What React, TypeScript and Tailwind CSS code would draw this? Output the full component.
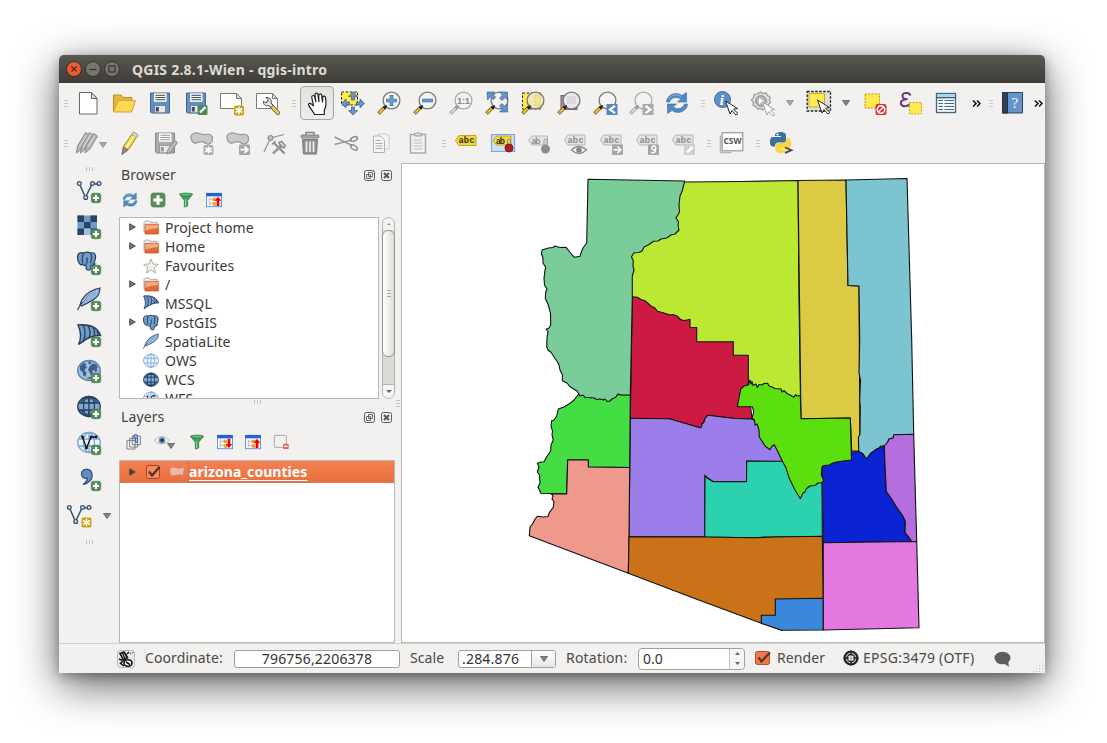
import React from "react";

type Kids = { children?: React.ReactNode };

const BLUE = "#6f9bcb";
const NAVY = "#2a3f5c";

/* ---------- icon primitives (24 unit grid) ---------- */

function Icon({ children, className = "size-6" }: Kids & { className?: string }) {
  return (
    <svg viewBox="0 0 24 24" className={`shrink-0 overflow-visible ${className}`} fill="none">
      {children}
    </svg>
  );
}

function Plus({ x = 14, y = 14 }: { x?: number; y?: number }) {
  return (
    <g transform={`translate(${x} ${y})`}>
      <rect x="0.3" y="0.3" width="9.4" height="9.4" rx="2" fill="#5a8f5b" stroke="#477a49" strokeWidth="0.7" />
      <path d="M5 2v6M2 5h6" stroke="#fff" strokeWidth="2" />
    </g>
  );
}

function Spark({ x = 14, y = 14, gray = false }: { x?: number; y?: number; gray?: boolean }) {
  return (
    <g transform={`translate(${x} ${y})`}>
      <rect width="10" height="10" rx="2" fill={gray ? "#a9a9a9" : "#c9a20c"} />
      <path d="M5 1.3v7.4M1.5 3l7 4M8.5 3l-7 4" stroke="#fff" strokeWidth="1.5" />
    </g>
  );
}

function Lens({ children, gray = false, fill = "#f3f3f2" }: Kids & { gray?: boolean; fill?: string }) {
  const dark = gray ? "#9a9a9a" : "#222";
  return (
    <>
      <circle cx="14.5" cy="9.5" r="8.4" fill={fill} stroke={gray ? "#aaa" : "#777"} strokeWidth="1.3" />
      <path d="M1.5 22.5 8 16" stroke={gray ? "#999" : "#6d5320"} strokeWidth="3.6" />
      <path d="M2 22 7.3 16.7" stroke={gray ? "#d8d8d8" : "#f9c22d"} strokeWidth="2.2" />
      <path d="M6 16.5 9.5 14.5 8.5 18z" fill={dark} stroke={dark} />
      {children}
    </>
  );
}

function Floppy({ gray = false }: { gray?: boolean }) {
  return (
    <>
      <path d="M2.5 2h19v20h-18l-1-1z" fill={gray ? "#aaa" : "#6290c4"} stroke={gray ? "#888" : "#3f6690"} />
      <rect x="6" y="2.3" width="12.5" height="8.5" fill="#fafafa" />
      <path d="M7.5 4.3h9.500M7.500 6.500h9.500M7.500 8.700h9.500" stroke={gray ? "#999" : "#444"} strokeWidth="1" />
      <rect x="6.500" y="14.500" width="11" height="7.300" fill="#e8e8e6" stroke={gray ? "#888" : "#58718c"} strokeWidth="0.700" />
      <rect x="7.800" y="16" width="3" height="4.500" fill={gray ? "#999" : "#35506e"} />
    </>
  );
}

function Pointer({ x = 12, y = 10, gray = false }: { x?: number; y?: number; gray?: boolean }) {
  return (
    <path
      transform={`translate(${x} ${y})`}
      d="M0 0 12 7.500 8 8.200 12.500 12.500 10.500 14 6.500 9.500 4.500 13z"
      fill="#fff"
      stroke={gray ? "#a2a2a2" : "#222"}
      strokeWidth="1"
    />
  );
}

function Blob() {
  return (
    <path
      d="M1.500 9C-.5 4 3 1.500 8 2c3 1 5 2 8 1.500 4-1 7 1 6.500 5-.5 4-3 5.500-6.500 4-3-2.500-5-2.500-8-1-3 1.500-5 .5-6.500-2.500z"
      fill="#c9c9c9"
      stroke="#949494"
      strokeWidth="1.200"
    />
  );
}

function Label({ gray = true, children }: Kids & { gray?: boolean }) {
  return (
    <>
      <path
        d="M5 5.500h17v10H5L1.300 10.500z"
        fill={gray ? "#e4e4e3" : "#f2d840"}
        stroke={gray ? "#b5b5b5" : "#c3a41c"}
        strokeWidth="1"
      />
      <text x="4.700" y="13" fontSize="8.500" fontWeight="700" fontFamily="Liberation Sans, sans-serif" fill={gray ? "#8a8a8a" : "#2d2d1a"} textLength="15.500">
        abc
      </text>
      {children}
    </>
  );
}

function GrayBadge({ children }: Kids) {
  return (
    <g>
      <rect x="13" y="13.500" width="11" height="10.500" rx="1" fill="#a6a6a6" />
      {children}
    </g>
  );
}

function Refresh() {
  return (
    <g fill="#4f8acb" stroke="#38699f" strokeWidth="0.600">
      <path d="M1.500 11C2 4 10 0 17 4.500L21.500 1.500v9.500h-9l3.500-3C11 5 6 6.500 4.500 11z" />
      <path d="M22.500 13C22 20 14 24 7 19.500L2.500 22.500v-9.500h9L8 16c5 3 10 1.500 11.500-3z" />
      <path d="M3.500 8C6 4 11 2.500 16 5.500" stroke="#a8cdf2" fill="none" />
    </g>
  );
}

function Funnel() {
  return (
    <>
      <path d="M2 3h20l-7.500 9.500V21L9.500 22.500v-10z" fill="#3aa457" stroke="#28693a" strokeWidth="1" />
      <ellipse cx="12" cy="4" rx="9.500" ry="2.300" fill="#58c277" stroke="#28693a" />
      <path d="M11.500 11v10" stroke="#92dca5" strokeWidth="1.600" />
    </>
  );
}

function TreePanel({ up = true }: { up?: boolean }) {
  return (
    <>
      <rect x="0.700" y="2" width="22.600" height="20" fill="#f7f9fc" stroke="#5b93e0" strokeWidth="1.400" />
      <rect x="0.500" y="1.500" width="23" height="5" fill="#2262d8" />
      <path d="M5 9v11M5 11h5M5 17h5" stroke="#bbb" strokeWidth="1.500" />
      <path d="M10 8.500h5v5h-5zM10 15.500h5v5h-5z" fill="#f0a030" />
      {up ? <path d="M18 7l5 6h-3v8h-4v-8h-3z" fill="#e90000" /> : <path d="M18 21l5-6h-3V7h-4v8h-3z" fill="#e90000" />}
    </>
  );
}

function Nodes() {
  return (
    <>
      <path d="M2.500 5 8.500 18.500 15 5h6.500" stroke="#34506f" strokeWidth="1.500" />
      <g fill="#d9e6f3" stroke="#34506f" strokeWidth="1.300">
        <circle cx="2.300" cy="4.500" r="1.900" />
        <circle cx="15.500" cy="4.500" r="1.900" />
        <circle cx="22" cy="4.500" r="1.900" />
        <circle cx="8.700" cy="18.500" r="1.900" />
      </g>
    </>
  );
}

function Elephant() {
  return (
    <>
      <path
        d="M.5 6C.5 2 4 1 6.500 2c2-1 5-1 7 0C17 1 19 3 18.500 7c-.5 3-1 5-2.500 6h2l-2 1.500h-2V17c-.5 3-4.500 3-5 0v-3l-2 .5L5.500 13 4 14C2 12.500.5 9.500.500 6z"
        fill={BLUE}
        stroke={NAVY}
        strokeWidth="1.200"
      />
      <path d="M6.500 2C5 6 5 9 6 12M9 13c2-1 1-4 1-6.500M13.500 2c2 3 1 7 0 10" stroke={NAVY} strokeWidth="1.200" />
    </>
  );
}

function Feather() {
  return (
    <>
      <path d="M3 18C5 10 12 3.500 23 1c0 7-3.500 10-7 12-4 2.500-7 4-11.500 6z" fill="#8fb3dc" stroke={NAVY} strokeWidth="1.100" />
      <path d="M0.500 23C4 15 11 8.500 19 4.500" stroke={NAVY} strokeWidth="1.200" />
      <path d="M5 15c5-5 9-8 15-11" stroke="#dbe8f6" strokeWidth="1" />
    </>
  );
}

function Sail() {
  return (
    <>
      <path d="M1 2c10-1 19 1 22.500 10.500C15 12 9 16 1.500 21.500c3-6 2.500-13-.5-19.500z" fill={BLUE} stroke={NAVY} strokeWidth="1.400" />
      <path d="M6 2c2.500 4.500 2.500 10.500.5 16M11 2.800c2.500 4 2.500 8 1 12M16 5c2 3 2 5.500 1 8.300M20 8c1 1.500 1.200 3 .8 4.500" stroke={NAVY} strokeWidth="1.300" />
    </>
  );
}

function Globe({ tone }: { tone: "light" | "dark" | "map" }) {
  const line = tone === "light" ? "#7fa5d6" : tone === "dark" ? NAVY : "#5c7fa8";
  return (
    <>
      <ellipse cx="12" cy="11.500" rx="11.300" ry="10" fill={tone === "light" ? "#eef4fc" : tone === "dark" ? "#7fa8d8" : "#9fbfe2"} stroke={line} strokeWidth="1.300" />
      {tone === "map" ? (
        <path d="M3 7l3-3 3 .5-.5 2.500 2 1-2 1.500-1 2 2 2-1 4-2-.5-1-4-2.500-2zM11 3l3-.5v2l-2 1zM13 7l2.500-2.500 4 1 1.500 3-1.500 1 1 2-2 2-1-2.500-2 .5v3l-1.500 2-1.500-3.500-1.500-2 1-2.500zM18 15l3 0-1.500 3zM9 19l4-1 3 1-3 1z" fill="#3e5f88" />
      ) : (
        <>
          {tone === "dark" && <path d="M5.500 3.500q6.500-4 13 0l3 4.500H2.500zM2.500 15h19l-3 4.500q-6.500 4-13 0z" fill="#244a72" opacity="0.800" />}
          <path d="M12 1.500v20M1.500 8h21M1.500 15h21" stroke={line} strokeWidth="1.300" />
          <ellipse cx="12" cy="11.500" rx="5.500" ry="10" stroke={line} strokeWidth="1.300" />
          {tone === "dark" && <path d="M8.500 4.500h2.500v2.500H7.500zM13 4.500h2.500l1 2.500H13zM7.500 16H11v2.500H8.500zM13 16h3.500l-1 2.500H13z" fill="#7fa8d8" />}
        </>
      )}
    </>
  );
}

/* ---------- layout parts ---------- */

function Cell({ children, className = "w-9" }: Kids & { className?: string }) {
  return <div className={`flex h-10 shrink-0 items-center justify-center ${className}`}>{children}</div>;
}

function Grip({ className = "w-[13px]" }: { className?: string }) {
  return (
    <div className={`flex shrink-0 flex-col items-center justify-center gap-[2px] pl-[2px] ${className}`}>
      <i className="h-px w-1 bg-[#c9c7c4]" />
      <i className="h-px w-1 bg-[#c9c7c4]" />
      <i className="h-px w-1 bg-[#c9c7c4]" />
    </div>
  );
}

function GripH() {
  return (
    <div className="flex h-1 justify-center gap-[2px]">
      <i className="h-1 w-px bg-[#c4c2bf]" />
      <i className="h-1 w-px bg-[#c4c2bf]" />
      <i className="h-1 w-px bg-[#c4c2bf]" />
    </div>
  );
}

function Caret({ light = false }: { light?: boolean }) {
  return (
    <svg viewBox="0 0 8 6" className="h-[6px] w-2 shrink-0">
      <path d="M.5.5h7L4 5.500z" fill={light ? "#a8a8a8" : "#858585"} stroke={light ? "#8d8d8d" : "#555"} strokeWidth="0.800" />
    </svg>
  );
}

function More() {
  return (
    <svg viewBox="0 0 9 7" className="h-[7px] w-[9px] shrink-0">
      <path d="M1 .5 4 3.500 1 6.500M5 .5l3 3-3 3" fill="none" stroke="#111" strokeWidth="1.500" />
    </svg>
  );
}

function MainToolbar() {
  return (
    <div className="flex h-10">
      <Grip className="w-[11px]" />
      <Cell>
        <Icon><path d="M3.500 1.500h12l5.500 6v15.500h-17.500z" fill="#fff" stroke="#666" /><path d="M15.500 1.500v6H21z" fill="#ddd" stroke="#666" /></Icon>
      </Cell>
      <Cell>
        <Icon><path d="M1.500 20V4h7.500l2 2.500h9V20z" fill="#e6b63d" stroke="#c18e24" /><path d="M1.500 21 6 9.500h17.500L19.500 21z" fill="#fcd851" stroke="#d5a52f" /></Icon>
      </Cell>
      <Cell><Icon><Floppy /></Icon></Cell>
      <Cell>
        <Icon><Floppy /><rect x="13.500" y="14" width="10" height="10" rx="1.500" fill="#4f8a55" /><path d="M16 21.500 21.500 16" stroke="#fff" strokeWidth="2.200" /></Icon>
      </Cell>
      <Cell>
        <Icon><path d="M.5 2.500h16l5 5v10H.5z" fill="#fff" stroke="#777" /><path d="M16.500 2.500v5h5z" fill="#ddd" stroke="#777" /><Spark x={14} y={14.500} /></Icon>
      </Cell>
      <Cell>
        <Icon>
          <path d="M.5 2.500h16l5 5v10H.5z" fill="#fff" stroke="#777" /><path d="M16.500 2.500v5h5z" fill="#ddd" stroke="#777" />
          <path d="M15.500 15 22 22" stroke="#6d5b21" strokeWidth="4.200" strokeLinecap="round" />
          <path d="M15.500 15 22 22" stroke="#e5ca63" strokeWidth="2.600" strokeLinecap="round" />
          <path d="M10 6.500l2 2-.5 2.500-2.500.5-1.500-1.500c-.5 3.500 2 5.500 5 4.500l2.500 2 2-2-2-2.500C16 9 13.500 6 10 6.500z" fill="#e5e5e5" stroke="#444" />
        </Icon>
      </Cell>
      <Grip />
      <Cell>
        <div className="flex h-[34px] w-[34px] items-center justify-center rounded border border-[#a9a6a1] bg-linear-to-b from-[#e3e1de] to-[#efedeb] pt-[2px] pl-[3px]">
          <Icon>
            <path d="M7.500 22.500C6 19 2.500 16 1.500 12.500 1.800 10.500 4 11 6.500 14L4.700 5c.3-2 2.300-2 3 0l1.200 5-1-7.500c.5-1.800 2.600-1.800 3 0l1 7.500-.2-7c.5-1.600 2.500-1.600 3 0l.8 7.500.2-5.500c.8-1.400 2.600-1 2.800.8.8 4.200 1 8.200-1.200 12.200v4.500z" fill="#fff" stroke="#222" strokeWidth="1.200" />
          </Icon>
        </div>
      </Cell>
      <Cell>
        <Icon>
          <rect x="0.500" y="1" width="16" height="13" fill="#ffe84c" stroke="#222" strokeDasharray="2.500 1.700" />
          <g fill="#6895cb" stroke="#34587f" strokeWidth="0.700">
            <path d="M12 1 16.500 5.500h-3V9h-3V5.500H7.500zM12 24 16.500 19.500h-3V16h-3v3.500H7.500zM.5 12.500 5 8v3h3.500v3H5v3zM23.500 12.500 19 8v3H15.500v3H19v3z" />
          </g>
        </Icon>
      </Cell>
      <Cell><Icon><Lens><path d="M14.500 4v11M9 9.500h11" stroke="#44719f" strokeWidth="3.600" /><path d="M14.500 4.500v10M9.500 9.500h10" stroke={BLUE} strokeWidth="2.300" /></Lens></Icon></Cell>
      <Cell><Icon><Lens><path d="M9 9.500h11" stroke="#44719f" strokeWidth="3.600" /><path d="M9.500 9.500h10" stroke={BLUE} strokeWidth="2.300" /></Lens></Icon></Cell>
      <Cell><Icon><Lens gray><text x="8" y="12.800" fontSize="9.500" fontWeight="700" fontFamily="Liberation Sans, sans-serif" fill="#888" textLength="13">1:1</text></Lens></Icon></Cell>
      <Cell>
        <Icon><Lens>
          <g fill="#6494cb" stroke="#34587f" strokeWidth="0.600">
            <path d="M2 1h8L7.700 3.300l3 3-2.400 2.400-3-3L2.500 9zM22.500 1v8L20 6.500l-3 3-2.500-2.500 3-3L14.500 1zM22.500 21v-8L20 15.500l-3-3-2.500 2.500 3 3-3 3z" />
          </g>
        </Lens></Icon>
      </Cell>
      <Cell>
        <Icon><rect x="1.500" y="2" width="18" height="16" fill="#ffe84c" stroke="#222" strokeDasharray="2.500 1.700" /><Lens fill="#eee8b8"><path d="M14 4h5v11h-5z" fill="#f4e688" stroke="#b9a848" strokeDasharray="2 1.500" strokeWidth="0.500" /></Lens></Icon>
      </Cell>
      <Cell>
        <Icon><rect x="4" y="4.500" width="16" height="14" fill="#a58fa9" stroke="#776080" /><Lens fill="#e9e7ea"><path d="M10 5h9v8h-9z" fill="#dcd8de" /></Lens></Icon>
      </Cell>
      <Cell><Icon><Lens><rect x="13.500" y="13" width="11" height="11" fill="#5687bd" /><path d="M22 14.800 17 18.500l5 3.700" stroke="#fff" strokeWidth="2.200" /></Lens></Icon></Cell>
      <Cell><Icon><Lens gray><rect x="13.500" y="13" width="11" height="11" fill="#aaa" /><path d="M16.500 14.800l5 3.700-5 3.700" stroke="#fff" strokeWidth="2.200" /></Lens></Icon></Cell>
      <Cell><Icon><Refresh /></Icon></Cell>
      <Grip />
      <Cell>
        <Icon>
          <circle cx="8.500" cy="8.500" r="8" fill="#5c8fc9" stroke="#3e6ea6" />
          <text x="5.800" y="14" fontSize="15" fontStyle="italic" fontWeight="700" fontFamily="Liberation Serif, serif" fill="#fff">i</text>
          <Pointer x={11.500} y={10} />
        </Icon>
      </Cell>
      <Cell>
        <Icon>
          <path d="M10.500 1l2.500 1.500 3-.5 1.500 2.500 2.500 1.500-.5 3 1 2.500-2 2-.5 3-3 .5-2.500 2-2-1.500-3 .5L6 16l-3-1.500.500-3L1.500 9l2-2.500L4 3.500 7 3z" fill="#dedede" stroke="#999" strokeWidth="1.200" />
          <circle cx="11" cy="10" r="5.300" fill="#b8b8b8" stroke="#888" /><path d="M9 7v6l5-3z" fill="#fff" />
          <Pointer x={12.500} y={11} gray />
        </Icon>
      </Cell>
      <Cell className="w-[21px] pr-[1px]"><Caret light /></Cell>
      <Cell>
        <Icon><rect x="0.200" y="0.500" width="23.300" height="19.500" fill="#dedede" stroke="#222" strokeWidth="1.300" strokeDasharray="2.500 1.500" /><path d="M2 2.500h15.500V16H2z" fill="#fee94e" stroke="#c7ad2a" /><Pointer x={10.500} y={9} /></Icon>
      </Cell>
      <Cell className="w-5 pr-[2px]"><Caret /></Cell>
      <Cell>
        <Icon>
          <rect x="2" y="3" width="14.500" height="14" fill="#fee94e" stroke="#b49422" strokeDasharray="2 1.200" />
          <rect x="12.500" y="13" width="11" height="11" rx="2" fill="#dc3030" />
          <circle cx="18" cy="18.500" r="3.700" stroke="#fff" strokeWidth="1.500" /><path d="M15.500 21 20.500 16" stroke="#fff" strokeWidth="1.500" />
        </Icon>
      </Cell>
      <Cell>
        <Icon>
          <path d="M11.500 4.500C10 .5 3 1.500 3.500 5.500c.2 2 2.500 3 5 2.700C3 8.200 1 11 2 13c1.500 3.500 8 2.500 9.500-1" stroke="#633a72" strokeWidth="2" />
          <rect x="10.500" y="11.500" width="12" height="11.500" fill="#fee94e" stroke="#c7a930" strokeDasharray="2 1.200" />
        </Icon>
      </Cell>
      <Cell>
        <Icon>
          <rect x="1.500" y="2.500" width="19" height="19" fill="#f5f8fa" stroke="#456579" strokeWidth="1.300" />
          <path d="M2 3h18v3H2z" fill="#a2d9ee" /><path d="M1.500 6.700h19" stroke="#3f5a70" strokeWidth="1.300" />
          <path d="M3.500 9.500H8M9.500 9.500H19M3.500 12.500H8M9.500 12.500H19M3.500 15.500H8M9.500 15.500H19M3.500 18.500H8M9.500 18.500H19" stroke="#45637a" strokeWidth="1.200" />
        </Icon>
      </Cell>
      <Cell className="w-6 pr-[2px]"><More /></Cell>
      <Grip className="w-[2px]" />
      <Cell className="w-[42px]">
        <Icon>
          <path d="M2.500 1.500h20V22h-20z" fill="#6394ca" stroke="#2b4562" /><path d="M2.500 1.500h5V22h-5z" fill="#2f4254" stroke="#263545" />
          <text x="11.500" y="17" fontSize="15" fontFamily="Liberation Serif, serif" fill="#fff">?</text>
        </Icon>
      </Cell>
      <Cell className="w-[10px]"><More /></Cell>
    </div>
  );
}

function EditToolbar() {
  return (
    <div className="flex h-10">
      <Grip className="w-[11px]" />
      <Cell className="w-[42px] pr-[1px]">
        <Icon>
          <g fill="#b5b5b5" stroke="#858585" strokeWidth="0.900">
            <path d="M1.500 22l1-7L10.500 1.500l4 2.500L6.500 18z" />
            <path d="M5.500 22l1-7L14.500 1.500l4 2.500L10.500 18z" />
            <path d="M10 22l1-7L18.500 2.500l4 2.500L15 18z" />
          </g>
          <path d="M4.500 16 12 3.500M8.500 16l7.500-12.500M13 16 20 4.500" stroke="#dedede" />
        </Icon>
        <div className="pt-1"><Caret light /></div>
      </Cell>
      <Cell>
        <Icon>
          <path d="M4 23.500 5.500 15.500 15.500 1l4.500 3L10.500 18.500z" fill="#f4da4b" stroke="#97812a" />
          <path d="M8 17 17.500 2.500" stroke="#fff5a5" strokeWidth="1.400" /><path d="M15.500 1l4.500 3-1.500 2.300-4.500-3z" fill="#ddd" stroke="#999" strokeWidth="0.800" />
          <path d="M4 23.500 5.500 15.700l4.700 3z" fill="#8d8d85" stroke="#666" strokeWidth="0.700" />
        </Icon>
      </Cell>
      <Cell><Icon><g transform="translate(-1 0)"><Floppy gray /></g><path d="M13 23l1-4.500L20.500 9.500l3 2L17 21z" fill="#bbb" stroke="#888" /></Icon></Cell>
      <Cell><Icon><Blob /><Spark x={13.500} y={14} gray /></Icon></Cell>
      <Cell><Icon><Blob /><GrayBadge><path d="M14.500 18.700h6M18.500 15.500l3.500 3.200-3.500 3.200" stroke="#fff" strokeWidth="1.800" /></GrayBadge></Icon></Cell>
      <Cell>
        <Icon>
          <path d="M2 21 8.500 7 22 3.500" stroke="#8f8f8f" strokeWidth="1.200" /><circle cx="8.500" cy="7" r="2.600" fill="#bbb" stroke="#888" />
          <path d="M12 12l10.500 10.500" stroke="#8d8d8d" strokeWidth="2.200" /><path d="M20 14l-9 8.500" stroke="#9a9a9a" strokeWidth="2.600" />
          <path d="M10 13.500l3.500-3.500M17 11.500l2.500-1 3.500 4-1 2-3-.500z" stroke="#8d8d8d" strokeWidth="1.700" />
        </Icon>
      </Cell>
      <Cell>
        <Icon>
          <path d="M8 4.500V1.500h8v3" stroke="#858585" strokeWidth="1.500" /><rect x="3" y="4" width="18" height="3" rx="1" fill="#a6a6a6" stroke="#777" strokeWidth="0.800" />
          <path d="M4.500 8.500h15L18.500 23h-13z" fill="#929292" stroke="#777" /><path d="M8.500 10.500v10.500M12 10.500v10.500M15.500 10.500v10.500" stroke="#eee" strokeWidth="1.700" />
        </Icon>
      </Cell>
      <Cell>
        <Icon>
          <path d="M.5 6 18 14.500M.5 13.500 18 9" stroke="#999" strokeWidth="1.700" />
          <ellipse cx="20" cy="8" rx="3.700" ry="2" transform="rotate(-25 20 8)" stroke="#888" strokeWidth="1.400" />
          <ellipse cx="20" cy="16.500" rx="3.700" ry="2" transform="rotate(30 20 16.500)" stroke="#888" strokeWidth="1.400" />
        </Icon>
      </Cell>
      <Cell>
        <Icon>
          <path d="M8.500 3h7.500l3 2.500V18H8.500z" fill="#f5f5f5" stroke="#c9c9c9" /><path d="M3.500 5h7l4 4V21.500h-11z" fill="#f6f6f6" stroke="#b2b2b2" />
          <path d="M5.500 9.500h5M5.500 12.500h7M5.500 15h7M5.500 17.500h7" stroke="#aaa" />
        </Icon>
      </Cell>
      <Cell>
        <Icon>
          <path d="M4.500 3.500h15v18.500h-15z" fill="#f2f2f1" stroke="#aaa" strokeWidth="1.500" /><path d="M8.500 5V2.500h2q1.500-2.500 3 0h2V5z" fill="#ddd" stroke="#999" />
          <path d="M7.500 9h8M7.500 12h9M7.500 15h9M7.500 18h9" stroke="#bbb" />
        </Icon>
      </Cell>
      <Grip />
      <Cell><Icon><g transform="translate(-1 -1)"><Label gray={false} /></g></Icon></Cell>
      <Cell>
        <Icon>
          <path d="M.5 3.500h23v17H.5z" fill="#cfdff3" stroke="#7da6de" strokeWidth="1.200" />
          <path d="M5.500 5H20v9H5.500L2 9.500z" fill="#f1d944" stroke="#c3a41c" />
          <text x="5" y="12.500" fontSize="8.500" fontWeight="700" fontFamily="Liberation Sans, sans-serif" fill="#2d2d1a" textLength="9">ab</text>
          <path d="M16.500 14V9q1.500-1.500 3 0V13.500" stroke="#888" /><circle cx="18" cy="17" r="4" fill="#b01f24" stroke="#861a1e" />
        </Icon>
      </Cell>
      <Cell>
        <Icon>
          <path d="M5 5h15.500v9H5L1.500 9.500z" fill="#e4e4e3" stroke="#b5b5b5" />
          <text x="4.500" y="12.500" fontSize="8.500" fontWeight="700" fontFamily="Liberation Sans, sans-serif" fill="#909090" textLength="9">ab</text>
          <path d="M17 14V9q1.500-1.500 3 0V13" stroke="#999" /><circle cx="18.500" cy="18" r="4.500" fill="#8c8c8c" />
        </Icon>
      </Cell>
      <Cell>
        <Icon><g transform="translate(0 -1.500)"><Label /></g><path d="M8.500 19q7-7 15 0-7.500 7-15 0z" fill="#f3f3f3" stroke="#8c8c8c" strokeWidth="1.200" /><circle cx="16" cy="19" r="2.800" fill="#888" /></Icon>
      </Cell>
      <Cell><Icon><g transform="translate(0 -1.500)"><Label /></g><GrayBadge><path d="M14.500 18.700h6M18.500 15.500l3.500 3.200-3.500 3.200" stroke="#fff" strokeWidth="1.500" /></GrayBadge></Icon></Cell>
      <Cell><Icon><g transform="translate(0 -1.500)"><Label /></g><GrayBadge><path d="M20.500 18a2 2 0 1 0-3.500 0 2 2 0 0 0 3.500 0v2q-1 2.500-4.500 1.500" stroke="#fff" strokeWidth="1.400" /></GrayBadge></Icon></Cell>
      <Cell><Icon><g transform="translate(0 -1.500)"><Label /></g><rect x="13" y="13.500" width="11" height="10.500" fill="#cfcfcf" /><path d="M15.500 22 16 19.500 20.500 15l2 2-4.500 4.500z" fill="#fff" /></Icon></Cell>
      <Grip />
      <Cell>
        <Icon>
          <path d="M.5 4.500v17h11" stroke="#b5b5b5" strokeWidth="1.500" /><rect x="2.200" y="1.700" width="20.500" height="18" fill="#fff" stroke="#aaa" strokeWidth="1.500" />
          <text x="3.500" y="13" fontSize="9" fontWeight="700" fontFamily="Noto Sans, sans-serif" fill="#555" textLength="18" lengthAdjust="spacingAndGlyphs">CSW</text>
        </Icon>
      </Cell>
      <Grip />
      <Cell>
        <Icon>
          <path d="M6 4C6 0 17 0 17 4v5q0 2.500-3 2.500H9.500Q6 11.500 6 15.500H3.500C0 15.500 0 6 3.500 6H12V5H6z" fill="#3c6f9f" />
          <path d="M17.500 19c0 4-11 4-11 0v-4.500q0-2.500 3-2.500h5q3.300 0 3.300-5H19.500c3.500 0 3.500 10.500 0 10.500H12v1h5.500z" fill="#fcd440" />
          <circle cx="8.500" cy="3.500" r="1.100" fill="#fff" />
          <path d="M16 16.500l6.500 2.700-6.500 2.700" stroke="#444" strokeWidth="1.700" />
        </Icon>
      </Cell>
    </div>
  );
}

function SideTool({ children }: Kids) {
  return <div className="flex h-9 shrink-0 items-center justify-center"><Icon>{children}</Icon></div>;
}

function SideBar() {
  return (
    <div className="flex w-[60px] shrink-0 flex-col pt-1">
      <GripH />
      <div className="h-[2px]" />
      <SideTool><Nodes /><Plus /></SideTool>
      <SideTool>
        <path d="M.5.5H20v19H.5z" fill={BLUE} />
        <path d="M.5.5H7V7H.5zM13.500.5H20V7h-6.500zM7 7h6.500v6.500H7zM.5 13.500H7V20H.5zM13.500 13.500H20V20h-6.500z" fill="#2a415f" />
        <path d="M7 13.500h6.500V20H7z" fill="#9dbfe3" /><Plus />
      </SideTool>
      <SideTool><Elephant /><Plus /></SideTool>
      <SideTool><Feather /><Plus /></SideTool>
      <SideTool><Sail /><Plus /></SideTool>
      <SideTool><Globe tone="map" /><Plus /></SideTool>
      <SideTool><Globe tone="dark" /><Plus /></SideTool>
      <SideTool>
        <Globe tone="light" />
        <path d="M5.500 6 9.500 17 14 6h5" stroke="#111" strokeWidth="1.300" />
        <g fill="#111"><circle cx="5.500" cy="6" r="1.400" /><circle cx="9.500" cy="17" r="1.400" /><circle cx="14" cy="6" r="1.400" /><circle cx="19" cy="6" r="1.400" /></g><Plus />
      </SideTool>
      <SideTool>
        <path d="M4.500 6.500c0-5 9.500-6 10.500.5C16 12.500 11 17 6 17.500c3-2 4.500-4 4-6.500-3 1-5.500-1-5.500-4.500z" fill="#5f8fc6" stroke="#2d4a6c" strokeWidth="1.200" /><Plus />
      </SideTool>
      <div className="flex h-9 shrink-0 items-center gap-[10px] pl-2">
        <Icon><Nodes /><Spark x={14.500} y={14.500} /></Icon>
        <div className="pt-0.5 pl-0.5"><Caret /></div>
      </div>
      <div className="h-[7px]" />
      <GripH />
    </div>
  );
}

function DockTitle({ children }: Kids) {
  return (
    <div className="flex h-6 items-center gap-1 pr-[2px] pb-[2px] pl-[2px]">
      <span className="flex-1 text-[14px] leading-5 tracking-[0.1px] text-[#44433f]">{children}</span>
      <svg viewBox="0 0 13 13" className="size-[13px]" fill="none" stroke="#5b5b58">
        <rect x="1.500" y="1.500" width="10" height="10" rx="2" /><path d="M5.500 3.500h4v4h-4zM3.500 5.500h4v4h-4z" strokeWidth="0.900" />
      </svg>
      <svg viewBox="0 0 13 13" className="size-[13px]" fill="none" stroke="#5b5b58">
        <rect x="1.500" y="1.500" width="10" height="10" rx="2" /><path d="M4 4l5 5M9 4 4 9" strokeWidth="2.200" />
      </svg>
    </div>
  );
}

function FolderIcon() {
  return (
    <>
      <path d="M1.500 19V3.500l2-2h6l1.500 2h10V7" fill="#f2f2f2" stroke="#888" />
      <path d="M3 6.500H23V21H3z" fill="#e46b34" stroke="#bb4319" /><path d="M3.500 7h19v5q-9 0-19 4z" fill="#f6a97d" />
    </>
  );
}

const tree: { label: string; expand?: boolean; icon: React.ReactNode }[] = [
  { label: "Project home", expand: true, icon: <FolderIcon /> },
  { label: "Home", expand: true, icon: <FolderIcon /> },
  { label: "Favourites", icon: <path d="M12 1.500l3 7.500 8 .5-6.200 5L19 22.500l-7-4.500-7 4.500 2.200-8L1 9.500 9 9z" fill="#f1f1ea" stroke="#a9ab9c" strokeWidth="1.400" /> },
  { label: "/", expand: true, icon: <FolderIcon /> },
  { label: "MSSQL", icon: <g transform="translate(0 -2)"><Sail /></g> },
  { label: "PostGIS", expand: true, icon: <g transform="translate(0 -1) scale(1.22)"><Elephant /></g> },
  { label: "SpatiaLite", icon: <g transform="translate(0 -1)"><Feather /></g> },
  { label: "OWS", icon: <Globe tone="light" /> },
  { label: "WCS", icon: <Globe tone="dark" /> },
  { label: "WFS", icon: <><Globe tone="light" /><path d="M6 7l4 10 4-10h5" stroke="#222" strokeWidth="1.500" /></> },
];

function Expander({ dark = false }: { dark?: boolean }) {
  return (
    <svg viewBox="0 0 7 8" className="h-2 w-[7px] shrink-0">
      <path d="M.7.8 6.300 4 .7 7.200z" fill={dark ? "#4d4038" : "#777"} stroke="#444" strokeWidth="0.900" />
    </svg>
  );
}

function BrowserDock() {
  return (
    <>
      <DockTitle>Browser</DockTitle>
      <div className="flex h-[29px] items-center gap-3 pb-[5px] pl-[3px]">
        <Icon className="size-4"><Refresh /></Icon>
        <Icon className="size-4">
          <rect x="1.500" y="1.500" width="21" height="21" rx="4" fill="#5a8f5b" stroke="#447b48" /><path d="M12 5v14M5 12h14" stroke="#fff" strokeWidth="4.500" />
        </Icon>
        <Icon className="size-4"><Funnel /></Icon>
        <Icon className="size-4"><TreePanel /></Icon>
      </div>
      <div className="flex h-[182px] gap-[3px]">
        <div className="w-[260px] overflow-hidden border border-[#bab8b4] bg-white">
          {tree.map((row) => (
            <div key={row.label} className="flex h-[19px] items-center pl-[9px]">
              <div className="flex w-[14px] pb-px">{row.expand && <Expander />}</div>
              <Icon className="size-4">{row.icon}</Icon>
              <span className="pl-[6px] text-[14px] leading-[19px] tracking-[0.1px] text-[#3a3936]">{row.label}</span>
            </div>
          ))}
        </div>
        <div className="flex w-[13px] flex-col items-center rounded-full border border-[#b5b2ae] bg-[#dcdad7]">
          <div className="flex h-3 w-full items-center justify-center rounded-t-full bg-[#f3f2f0]">
            <svg viewBox="0 0 4 2" className="h-[2px] w-1"><path d="M0 2 2 0l2 2z" fill="#999" /></svg>
          </div>
          <div className="flex h-[127px] w-[13px] flex-col items-center justify-center gap-[2px] rounded-md border border-[#96938f] bg-linear-to-r from-white to-[#dfddda]">
            <i className="h-px w-1 bg-[#aaa]" /><i className="h-px w-1 bg-[#aaa]" /><i className="h-px w-1 bg-[#aaa]" />
          </div>
          <div className="flex-1" />
          <div className="flex h-[14px] w-full items-center justify-center rounded-b-full border-t border-[#b5b2ae] bg-[#f7f6f5]">
            <svg viewBox="0 0 6 3" className="h-[3px] w-[6px]"><path d="M0 0h6L3 3z" fill="#666" /></svg>
          </div>
        </div>
      </div>
    </>
  );
}

function LayersDock() {
  return (
    <>
      <DockTitle>Layers</DockTitle>
      <div className="flex h-[30px] items-center pb-[6px] pl-[7px]">
        <Icon className="size-4">
          <path d="M1.500 9.500h12v13h-12zM5.500 6.500h12v13h-12zM9.500 3h12v13h-12z" fill="#f6f6f5" stroke="#777" strokeWidth="1.400" />
          <path d="M12 6V3q2.500-4.500 5 0v8q-1.500 3-3 0V5" stroke="#2b6abb" strokeWidth="1.800" />
        </Icon>
        <div className="flex w-[39px] items-center justify-center pl-[6px]">
          <Icon className="size-4"><path d="M0 9.500Q12-2 23 9.500 12 20 0 9.500z" fill="#f3f3f2" stroke="#aaa" strokeWidth="1.200" /><circle cx="12" cy="9.500" r="4.800" fill="#5a8ab5" /><circle cx="12" cy="9.500" r="2.200" fill="#223" /></Icon>
          <div className="-ml-[3px] pt-2"><Caret /></div>
        </div>
        <div className="flex gap-3 pl-2">
          <Icon className="size-4"><Funnel /></Icon>
          <Icon className="size-4"><TreePanel up={false} /></Icon>
          <Icon className="size-4"><TreePanel /></Icon>
          <Icon className="size-4"><rect x="2" y="2" width="18" height="18" rx="1" stroke="#aaa" strokeWidth="1.500" /><rect x="15" y="14.500" width="8.500" height="8" rx="1" fill="#ef5b61" /><path d="M16.500 18.500h5.500" stroke="#fff" strokeWidth="2" /></Icon>
        </div>
      </div>
      <div className="w-[276px] flex-1 border border-[#bab8b4] bg-white">
        <div className="flex h-[22px] items-center border-b border-dotted border-[#a77e67] bg-linear-to-b from-[#f47f51] to-[#ea713e] pl-[9px]">
          <Expander dark />
          <svg viewBox="0 0 16 16" className="ml-[9px] size-4" fill="none">
            <rect x="1.500" y="1.500" width="13" height="13" rx="2" fill="#f78a60" stroke="#a6431f" /><path d="M4 7.500 7 11.500 14.500 3" stroke="#4b3329" strokeWidth="2.200" />
          </svg>
          <svg viewBox="0 0 16 12" className="ml-2 h-3 w-4">
            <path d="M1 2q3-2 6-.5t7-.5q2 0 1 4t-1 5q-3-2-6-1T2 10Q0 7 1 2z" fill="#edb9a5" stroke="#c97a5f" strokeWidth="0.800" />
          </svg>
          <span className="ml-[3px] flex h-[21px] items-center border-l border-dotted border-[#8e7266] text-[14px] font-bold tracking-[0.05px] text-white underline decoration-1 underline-offset-[3px]">arizona_counties</span>
        </div>
      </div>
    </>
  );
}

/* Painted in order: later regions define the shared boundary. */
const counties: { fill: string; points: string }[] = [
  { fill: "#bae833", points: "670,184 684,182 742,181.500 798,180.500 799,300 800.500,400 770,405 690,400 625,330 625,250 645,234 670,222" },
  { fill: "#ddca43", points: "798,180.500 846,180 848,285.500 859,286 860,451 851.700,451 850.300,418 801,418.700 800,340" },
  { fill: "#7cc4d0", points: "846,180 907,178.500 911.700,340 913.700,434.300 894,434.700 893,438 889,439 887.700,442 885,446 881,446 879,448 876,449.500 873,453 871,453 866.700,459 864,456 863,454 858.700,451.300 858.400,437 860,434.500 860.300,407 859.700,400 860.500,380 859,373 859.700,340 859,286 848,285.500" },
  { fill: "#cd1a42", points: "632.300,296.700 637.300,297.300 641,299.500 645,300.700 651,306 655,308 657.300,311.300 664,313 670,315 673,314.500 677,316 680,319 683,320.500 687,320 690,319.300 690,327.300 696.700,327.500 696.700,341.700 733.300,341.700 733.300,355.300 748.300,355.300 748.300,385 752,419 735,418.500 720,416.700 707.700,415.300 705,418.500 704,422 702,424 701.500,427 700,427.700 669.300,418.700 630.300,418.300" },
  { fill: "#9c7eea", points: "630.300,418.300 669.300,418.700 700,427.700 701.500,427 702,424 704,422 705,418.500 707.700,415.300 720,416.700 735,418.500 752,419 775,430 785,461.500 746.700,461 746.500,481.700 713.300,481.700 705,476 704.700,536.700 629,536.700" },
  { fill: "#2cd2af", points: "705,475 707,478 713.300,481.700 746.500,481.700 746.700,461.300 785,461.300 822,475 822.300,536.300 775,537 753,537.700 704.700,537" },
  { fill: "#0b24d3", points: "822,466 851.700,452 858.700,451.500 863,454 866.700,459 871,453 876,449.500 884.300,446 886.300,491.700 891,498 895.700,505.700 903.300,516.700 905.300,521.700 905,532.700 908,536 911.700,541.500 823.300,542.700 822.300,483" },
  { fill: "#5bdf0f", points: "748.300,385 750,380 751,384 752,381.500 753,385.500 756,384 757.300,387.500 759,384.500 762,385 764,383.500 767.700,383.300 769,386 772,387 775,388.500 781,389 782,392 784,390.500 787,393.500 790,395 794,397.300 795.500,394.500 797,396 800.300,395.500 801,418.700 850.300,418 851.500,460 843,461 836.700,462 833,463 829,465 824,465.500 822,467 821.300,475 823.700,480 822,482.700 818,483 815,485.500 810,486 806,489 805,492 803,493 800.300,498.700 795,490 789.300,478.300 786,468 782.700,461.700 774.300,444.700 772,446 770,449.700 765,446 762,441 759.300,437.300 759,430 757,424 755,425 754.500,420 752,418.300 753.700,411.700 752.300,406.700 737.300,406.700 739,398 740.700,389 744,386" },
  { fill: "#b46edd", points: "894,434.700 913.700,434.300 916.700,541.300 911.700,541.500 908,536 905,532.700 905.300,521.700 903.300,516.700 895.700,505.700 891,498 886.300,491.700 885,465 884.300,446 887.700,442 889,439 893,438" },
  { fill: "#44dd44", points: "578.700,394 630.300,395 629.700,467.500 588.300,467 588.300,460 567.700,459.700 566.700,494 551,493.500 540.700,493.300 539.500,490 538,487.300 540,483 539.500,475 537.300,472 539,467 537.300,463.300 541,462 544,461.700 546.700,456.700 550.700,451 551,445 553.300,440 552,435 552.500,431 551,426 551.700,420.700 554,420 556.700,416 558.300,409 564,407 570,403.300 574,400" },
  { fill: "#7acc99", points: "588,179.300 684.700,181 682.300,190.700 680,196 679,205 679.500,211.700 678,215 676,217.700 678.500,222 678,225 679,230 677,232 675,234 671,235 666.700,238 661,239 658,241 653.500,241.300 649,244.500 644,247 642,251 639,252.500 634,252.700 631.500,256.700 633.300,261 633,266 634,270 632.300,276 632.300,296.700 630.300,395 622,395 617.700,394 616,397 612,399 610,401 607.300,401.500 605,399 603.300,400 600,399 596.700,399.500 594,398 588,397.500 585,397.300 583,395 580,396 578.700,393.700 577,391 570,386.700 567,383 562.300,380.700 562.500,375 560,370 559,365 557.300,361.700 554,357 551,352.300 548,350 546.700,346.700 547,338 548,331.700 546.300,329.300 549,328 550.700,325 550.500,313.300 548.300,305 545.300,298.300 545.700,292 547,289 544.500,285 544,278 545,270 545.700,267.300 543,263 543,258 541.500,254 542,250 548.300,248 553,247.500 555,246 560,247.500 566,247.300 569,251 571,253.500 574.300,257.300 580,256.300 581,253 583,248 586.700,243" },
  { fill: "#ee998b", points: "567.700,459.700 588.300,460 588.300,467 629.700,467.500 629,536.700 628.300,573.300 529.300,535.700 530,527 533,523.300 535,519 537.300,516.300 543,517 548,516.500 549.300,512.700 553.300,507.300 554,501.700 552,499 553,496 551,493.700 566.700,494" },
  { fill: "#c97218", points: "629,536.700 704.700,537 753,537.700 775,537 822.300,536.300 823.300,598.500 781.700,630.300 761.300,623.300 700,600.500 628.300,573.300" },
  { fill: "#3a87db", points: "761.300,615.300 775.300,615.300 775.300,599 823.300,598.300 823.300,630 781.700,630.300 761.300,623.300" },
  { fill: "#e577e1", points: "823.300,542.700 916.700,541.500 919,627.700 823.300,630" },
];

function MapCanvas() {
  return (
    <div className="w-[644px] shrink-0 border border-[#bab8b4] bg-white">
      <svg viewBox="402 164 642 478" className="block h-[478px] w-[642px]">
        {counties.map((c) => (
          <polygon key={c.fill} points={c.points} fill={c.fill} stroke="#111" strokeWidth="1.100" strokeLinejoin="round" />
        ))}
      </svg>
    </div>
  );
}

function StatusBar() {
  return (
    <div className="flex h-[30px] items-center border-t border-[#d3d1ce] text-[14px] leading-5 whitespace-nowrap text-[#4a4946]">
      <svg viewBox="0 0 18 18" className="ml-[58px] size-[18px]" fill="none">
        <rect x="0.500" y="0.500" width="17" height="17" rx="3" fill="#eae8e6" stroke="#bbb" />
        <path d="M3 3.500l4-1.500 3.500 5.500-4 2.500z" fill="#fff" stroke="#111" strokeWidth="1.600" /><path d="M5.500 3l2.500 6M8 3l1.500 4M2 9l3.500 1.500M10 4l2-2" stroke="#111" strokeWidth="1.400" />
        <ellipse cx="11" cy="13" rx="4" ry="3.300" fill="#fff" stroke="#111" strokeWidth="1.600" /><path d="M9 12l4 2.500M6 11l-2.500 2.500L7 16" stroke="#111" strokeWidth="1.500" /><path d="M13 4l4-2" stroke="#222" strokeDasharray="1 1" />
      </svg>
      <span className="ml-[10px] w-[89px] pb-[2px] tracking-[0.1px]">Coordinate:</span>
      <div className="flex h-[18px] w-[166px] items-center justify-center rounded-[3px] border border-[#a3a09c] bg-white tracking-[0.18px] text-[#333]">796756,2206378</div>
      <span className="ml-[10px] w-12 pb-[2px] tracking-[0.1px]">Scale</span>
      <div className="flex h-[18px] w-[98px] items-center rounded-[3px] border border-[#a3a09c] bg-white text-[#333]">
        <div className="h-4 w-[72px] overflow-hidden pl-[3px] leading-4 tracking-[0.2px]">.284.876</div>
        <div className="flex h-full flex-1 items-center justify-center rounded-r-[2px] border-l border-[#a3a09c] bg-linear-to-b from-white to-[#e8e6e4]"><Caret /></div>
      </div>
      <span className="ml-[10px] w-[72px] pb-[2px] tracking-[0.2px]">Rotation:</span>
      <div className="flex h-[22px] w-[107px] items-center rounded border border-[#a3a09c] bg-white text-[#333]">
        <span className="w-[90px] pl-1">0.0</span>
        <div className="flex h-full flex-1 flex-col items-center justify-around rounded-r border-l border-[#c5c3c0] bg-[#f7f6f5]">
          <svg viewBox="0 0 5 3" className="h-[3px] w-[5px]"><path d="M0 3h5L2.500 0z" fill="#666" /></svg>
          <svg viewBox="0 0 5 3" className="h-[3px] w-[5px]"><path d="M0 0h5L2.500 3z" fill="#666" /></svg>
        </div>
      </div>
      <svg viewBox="0 0 16 16" className="mb-[2px] ml-[10px] size-4" fill="none">
        <rect x="0.500" y="1.500" width="14" height="13" rx="2" fill="#f2784b" stroke="#a9502d" /><path d="M3.500 7.500 6.500 11.500 15 2.500" stroke="#5a3526" strokeWidth="2.200" />
      </svg>
      <span className="ml-[6px] w-[66px] pb-[2px] tracking-[0.1px]">Render</span>
      <svg viewBox="0 0 16 16" className="mb-[2px] size-4" fill="none" stroke="#222">
        <circle cx="8" cy="8" r="6.500" fill="#bbb" strokeWidth="2.200" /><circle cx="8" cy="8" r="3.500" fill="#fff" strokeWidth="1.300" /><path d="M8 .5v5M8 10.500v5M.5 8h5M10.500 8h5" strokeWidth="1.300" /><path d="M8 5v6M5 8h6" stroke="#888" strokeWidth="0.800" />
      </svg>
      <span className="ml-1 w-[131px] pb-[2px] tracking-[0.25px]">EPSG:3479 (OTF)</span>
      <svg viewBox="0 0 17 16" className="h-4 w-[17px]"><ellipse cx="8.500" cy="7" rx="8" ry="6.300" fill="#5e5e5c" /><path d="M9 12l6 3.700-1-6z" fill="#5e5e5c" /></svg>
      <svg viewBox="0 0 12 12" className="ml-auto size-3 self-end" fill="#c5c3c0">
        <path d="M9 1h1v1H9zM9 4h1v1H9zM6 4h1v1H6zM9 7h1v1H9zM6 7h1v1H6zM3 7h1v1H3zM9 10h1v1H9zM6 10h1v1H6zM3 10h1v1H3zM0 10h1v1H0z" />
      </svg>
    </div>
  );
}

export default function App() {
  return (
    <div className="h-[743px] w-[1107px] overflow-hidden bg-white pt-[55px] pl-[59px] font-['Noto_Sans',sans-serif]">
      <div className="w-[986px] rounded-t-[5px] bg-[#f2f1f0] shadow-[0_12px_44px_rgba(0,0,0,0.62),0_3px_12px_rgba(0,0,0,0.3)]">
        <div className="flex h-7 items-center gap-[3px] rounded-t-[5px] bg-linear-to-b from-[#5a5851] to-[#3d3c37] pl-[7px]">
          <svg viewBox="0 0 16 16" className="size-4"><circle cx="8" cy="8" r="7.500" fill="#ee5a2e" stroke="#35332e" /><path d="M5.500 5.500l5 5M10.500 5.500l-5 5" stroke="#4c2a1c" strokeWidth="1.300" /></svg>
          <svg viewBox="0 0 16 16" className="size-4"><circle cx="8" cy="8" r="7.500" fill="#77756d" stroke="#35332e" /><path d="M4.500 8.500h7" stroke="#35332e" strokeWidth="1.200" /></svg>
          <svg viewBox="0 0 16 16" className="size-4"><circle cx="8" cy="8" r="7.500" fill="#77756d" stroke="#35332e" /><rect x="5" y="5" width="6" height="6" fill="none" stroke="#35332e" strokeWidth="1.200" /></svg>
          <span className="pl-[9px] text-[14px] font-bold tracking-[0.23px] whitespace-nowrap text-[#dfdbd2]">QGIS 2.8.1-Wien - qgis-intro</span>
        </div>
        <MainToolbar />
        <EditToolbar />
        <div className="flex h-[480px]">
          <SideBar />
          <div className="flex w-[276px] shrink-0 flex-col pt-px">
            <BrowserDock />
            <div className="h-[7px] pt-px"><GripH /></div>
            <LayersDock />
          </div>
          <div className="flex w-[6px] shrink-0 flex-col items-center pt-[237px]">
            <div className="flex flex-col gap-[2px]">
              <i className="h-px w-1 bg-[#c4c2bf]" /><i className="h-px w-1 bg-[#c4c2bf]" /><i className="h-px w-1 bg-[#c4c2bf]" />
            </div>
          </div>
          <MapCanvas />
        </div>
        <StatusBar />
      </div>
    </div>
  );
}
